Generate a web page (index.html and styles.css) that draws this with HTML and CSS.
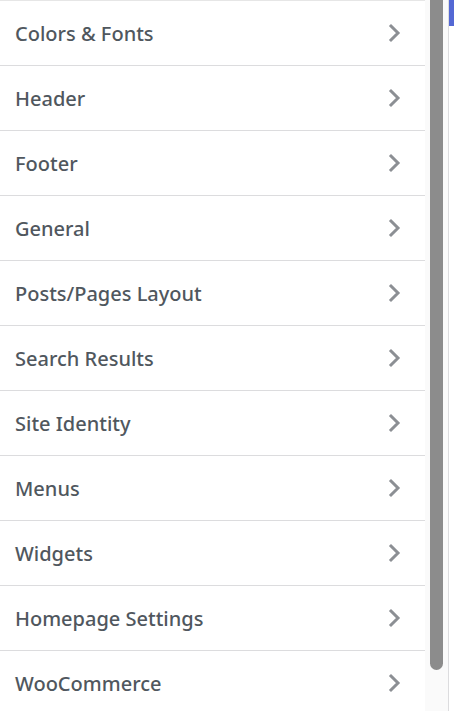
FILE: index.html
```html
<!DOCTYPE html>
<html>
<head>
<meta charset="utf-8">
<link rel="stylesheet" href="styles.css">
</head>
<body>
<div class="app">
  <ul class="panel">
    <li class="item"><span class="label">Colors &amp; Fonts</span><svg class="chev" viewBox="0 0 14 20"><polyline points="3,3 10,10 3,17"/></svg></li>
    <li class="item"><span class="label">Header</span><svg class="chev" viewBox="0 0 14 20"><polyline points="3,3 10,10 3,17"/></svg></li>
    <li class="item"><span class="label">Footer</span><svg class="chev" viewBox="0 0 14 20"><polyline points="3,3 10,10 3,17"/></svg></li>
    <li class="item"><span class="label">General</span><svg class="chev" viewBox="0 0 14 20"><polyline points="3,3 10,10 3,17"/></svg></li>
    <li class="item"><span class="label">Posts/Pages Layout</span><svg class="chev" viewBox="0 0 14 20"><polyline points="3,3 10,10 3,17"/></svg></li>
    <li class="item"><span class="label">Search Results</span><svg class="chev" viewBox="0 0 14 20"><polyline points="3,3 10,10 3,17"/></svg></li>
    <li class="item"><span class="label">Site Identity</span><svg class="chev" viewBox="0 0 14 20"><polyline points="3,3 10,10 3,17"/></svg></li>
    <li class="item"><span class="label">Menus</span><svg class="chev" viewBox="0 0 14 20"><polyline points="3,3 10,10 3,17"/></svg></li>
    <li class="item"><span class="label">Widgets</span><svg class="chev" viewBox="0 0 14 20"><polyline points="3,3 10,10 3,17"/></svg></li>
    <li class="item"><span class="label">Homepage Settings</span><svg class="chev" viewBox="0 0 14 20"><polyline points="3,3 10,10 3,17"/></svg></li>
    <li class="item"><span class="label">WooCommerce</span><svg class="chev" viewBox="0 0 14 20"><polyline points="3,3 10,10 3,17"/></svg></li>
  </ul>
  <div class="track"><div class="thumb"></div></div>
  <div class="divider"></div>
  <div class="preview"><div class="bar"></div></div>
</div>
</body>
</html>
```
FILE: styles.css
```css
html, body {
  margin: 0;
  padding: 0;
  background: #fafafa;
  overflow: hidden;
}
.app {
  display: flex;
  height: 711px;
  overflow: hidden;
}
.panel {
  list-style: none;
  margin: 0;
  padding: 0;
  width: 425px;
  flex: none;
  background: #fff;
  border-top: 1px solid #e6e6e6;
  align-self: flex-start;
}
.item {
  display: flex;
  align-items: center;
  justify-content: space-between;
  height: 64px;
  padding: 0 23px 0 15px;
  border-bottom: 1px solid #dcdcde;
}
.label {
  font-family: "Noto Sans", "Open Sans", sans-serif;
  font-size: 20px;
  font-weight: 500;
  color: #50575e;
  padding-top: 1px;
}
.chev {
  width: 14px;
  height: 20px;
}
.chev polyline {
  fill: none;
  stroke: #8c8f94;
  stroke-width: 3;
  stroke-linecap: square;
}
.track {
  width: 23px;
  flex: none;
  background: #fafafa;
  padding-left: 5px;
  box-sizing: border-box;
}
.thumb {
  width: 13px;
  height: 670px;
  background: #8c8c8c;
  border-radius: 0 0 7px 7px;
}
.divider {
  width: 1px;
  flex: none;
  background: #dcdcde;
}
.preview {
  flex: 1;
  background: #fff;
}
.bar {
  height: 26px;
  background: #5468d4;
}
```
